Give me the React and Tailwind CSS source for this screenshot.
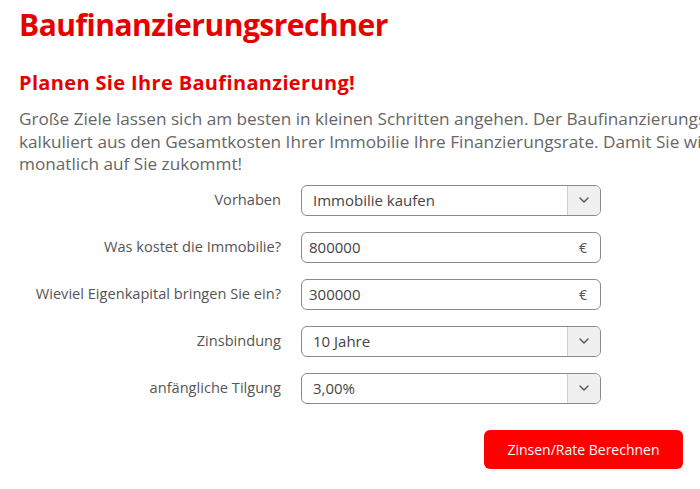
import React from "react";

function Chevron() {
  return (
    <svg width="10" height="6" viewBox="0 0 10 6" fill="none">
      <path d="M1 1l4 4 4-4" stroke="#555" strokeWidth="1.4" strokeLinecap="round" strokeLinejoin="round" />
    </svg>
  );
}

function SelectBox({ value }) {
  return (
    <div className="flex h-[31px] w-[300px] items-stretch overflow-hidden rounded-[6px] border border-[#8a8a8a] bg-white">
      <div className="flex flex-1 items-center pl-[11px] text-[15px] text-[#444]">{value}</div>
      <div className="flex w-[33px] items-center justify-center border-l border-[#cfcfcf] bg-[#f0f0f0]">
        <Chevron />
      </div>
    </div>
  );
}

function NumberBox({ value }) {
  return (
    <div className="flex h-[31px] w-[300px] items-center justify-between rounded-[6px] border border-[#8a8a8a] bg-white pl-[7px] pr-[13px] text-[15px] text-[#444]">
      <span>{value}</span>
      <span className="text-[14px] text-[#555]">€</span>
    </div>
  );
}

const rows = [
  ["Vorhaben", <SelectBox value="Immobilie kaufen" />],
  ["Was kostet die Immobilie?", <NumberBox value="800000" />],
  ["Wieviel Eigenkapital bringen Sie ein?", <NumberBox value="300000" />],
  ["Zinsbindung", <SelectBox value="10 Jahre" />],
  ["anfängliche Tilgung", <SelectBox value="3,00%" />],
];

export default function App() {
  return (
    <div
      className="relative h-[489px] w-[700px] overflow-hidden bg-white"
      style={{ fontFamily: "'Open Sans', sans-serif" }}
    >
      <div className="w-[800px] pl-[19px]">
        <h1 className="pt-[5px] text-[30px] font-bold leading-[40px] tracking-[-0.5px] text-[#e60000]">
          Baufinanzierungsrechner
        </h1>
        <h2 className="mt-[26px] text-[20px] font-bold leading-[24px] tracking-[0.35px] text-[#e60000]">
          Planen Sie Ihre Baufinanzierung!
        </h2>
        <p className="mt-[13px] text-[17.2px] leading-[22.5px] text-[#666]">
          Große Ziele lassen sich am besten in kleinen Schritten angehen. Der Baufinanzierungsrechner
          kalkuliert aus den Gesamtkosten Ihrer Immobilie Ihre Finanzierungsrate. Damit Sie wissen, was
          monatlich auf Sie zukommt!
        </p>
      </div>
      <div className="ml-[19px] mt-[9px] w-[664px]">
        <div className="grid grid-cols-[262px_300px] gap-x-[20px] gap-y-[16px]">
          {rows.map(([label, field]) => (
            <React.Fragment key={label}>
              <div className="flex items-center justify-end text-[14.6px] text-[#555]">{label}</div>
              {field}
            </React.Fragment>
          ))}
        </div>
        <div className="mt-[26px] flex justify-end">
          <button className="h-[39px] w-[199px] rounded-[6px] bg-[#ff0000] text-[14px] text-white">
            Zinsen/Rate Berechnen
          </button>
        </div>
      </div>
    </div>
  );
}
